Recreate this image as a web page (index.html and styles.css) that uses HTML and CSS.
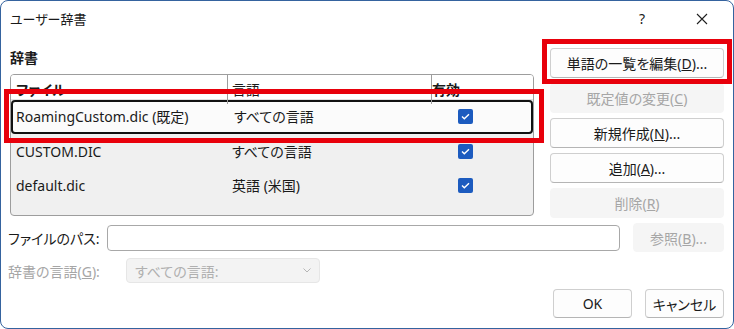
FILE: index.html
```html
<!DOCTYPE html>
<html>
<head>
    <title>ユーザー辞書</title>
    <link rel="stylesheet" href="styles.css">
</head>
<body>
    <div class="window">
        <div class="titlebar">
            <span class="title">ユーザー辞書</span>
            <span class="help">?</span>
            <span class="close">
                <svg width="12" height="12" viewBox="0 0 12 12"><path d="M1 1L11 11M11 1L1 11" stroke="#1f1f1f" stroke-width="1.1" fill="none"/></svg>
            </span>
        </div>

        <div class="main">
            <div class="left-col">
                <div class="group-label">辞書</div>
                <div class="dict-list">
                    <div class="list-head">
                        <div class="col-file">ファイル</div>
                        <div class="col-lang">言語</div>
                        <div class="col-on">有効</div>
                    </div>
                    <div class="list-row selected">
                        <div class="col-file">RoamingCustom.dic (既定)</div>
                        <div class="col-lang">すべての言語</div>
                        <div class="col-on"><span class="check"><svg width="15" height="15" viewBox="0 0 15 15"><path d="M4 7.6L6.3 9.8L11 5.2" stroke="#fff" stroke-width="1.4" fill="none"/></svg></span></div>
                    </div>
                    <div class="list-row">
                        <div class="col-file">CUSTOM.DIC</div>
                        <div class="col-lang">すべての言語</div>
                        <div class="col-on"><span class="check"><svg width="15" height="15" viewBox="0 0 15 15"><path d="M4 7.6L6.3 9.8L11 5.2" stroke="#fff" stroke-width="1.4" fill="none"/></svg></span></div>
                    </div>
                    <div class="list-row">
                        <div class="col-file">default.dic</div>
                        <div class="col-lang">英語 (米国)</div>
                        <div class="col-on"><span class="check"><svg width="15" height="15" viewBox="0 0 15 15"><path d="M4 7.6L6.3 9.8L11 5.2" stroke="#fff" stroke-width="1.4" fill="none"/></svg></span></div>
                    </div>
                </div>
            </div>
            <div class="right-col">
                <button class="btn">単語の一覧を編集(<u>D</u>)...</button>
                <button class="btn" disabled>既定値の変更(<u>C</u>)</button>
                <button class="btn">新規作成(<u>N</u>)...</button>
                <button class="btn">追加(<u>A</u>)...</button>
                <button class="btn" disabled>削除(<u>R</u>)</button>
            </div>
        </div>

        <div class="path-row">
            <span class="field-label">ファイルのパス:</span>
            <div class="path-input"></div>
            <button class="btn browse" disabled>参照(<u>B</u>)...</button>
        </div>

        <div class="lang-row">
            <span class="field-label off">辞書の言語(<u>G</u>):</span>
            <div class="lang-select">
                <span>すべての言語:</span>
                <svg width="8" height="5" viewBox="0 0 8 5"><path d="M0.5 0.5L4 4L7.5 0.5" stroke="#b5b5b5" stroke-width="1" fill="none"/></svg>
            </div>
        </div>

        <div class="footer">
            <button class="btn small">OK</button>
            <button class="btn small">キャンセル</button>
        </div>

        <div class="mark mark-row"></div>
        <div class="mark mark-btn"></div>
    </div>
</body>
</html>
```

FILE: styles.css
```css
body {
    margin: 0;
    font-family: "Noto Sans", "Noto Sans CJK JP", sans-serif;
    font-size: 14px;
    font-feature-settings: "palt";
    color: #1a1a1a;
    background: #ffffff;
}
.window {
    position: relative;
    width: 734px;
    height: 329px;
    box-sizing: border-box;
    border: 1px solid #35639f;
    border-radius: 8px;
    background: #ffffff;
    display: flex;
    flex-direction: column;
    overflow: hidden;
}
.titlebar {
    height: 35px;
    display: flex;
    align-items: center;
    padding-left: 9px;
    flex-shrink: 0;
}
.title {
    font-size: 13px;
    flex: 1;
}
.help {
    width: 60px;
    text-align: center;
    font-size: 14px;
}
.close {
    width: 60px;
    height: 12px;
    display: flex;
    justify-content: center;
    margin-right: 1px;
}
.main {
    display: flex;
    gap: 16px;
    padding: 12px 9px 0 9px;
}
.left-col {
    width: 524px;
}
.group-label {
    font-weight: bold;
    font-size: 14px;
    height: 20px;
    line-height: 20px;
    margin-bottom: 6px;
}
.dict-list {
    height: 142px;
    box-sizing: border-box;
    border: 1px solid #9d9d9d;
    border-radius: 4px;
    background: #f0f0f0;
    overflow: hidden;
}
.list-head,
.list-row {
    display: grid;
    grid-template-columns: 217px 204px 1fr;
}
.list-head {
    height: 25px;
    background: #ffffff;
    font-weight: bold;
    border-bottom: 1px solid #e0e0e0;
    box-sizing: border-box;
}
.list-head > div {
    line-height: 29px;
    border-right: 1px solid #9d9d9d;
}
.list-head .col-lang {
    font-weight: normal;
}
.list-head .col-on {
    border-right: none;
}
.col-file {
    padding-left: 5px;
}
.col-lang {
    padding-left: 4px;
}
.list-row {
    height: 34px;
    align-items: center;
}
.list-row .col-on {
    padding-left: 26px;
    display: flex;
}
.list-row.selected {
    background: #fbfbfb;
    border: 2px solid #111111;
    border-radius: 4px;
    box-sizing: border-box;
    padding-bottom: 2px;
}
.list-row.selected .col-file {
    padding-left: 3px;
}
.list-row.selected .col-on {
    padding-left: 24px;
}
.check {
    width: 15px;
    height: 15px;
    border-radius: 2px;
    background: #1c5bbf;
    display: flex;
}
.right-col {
    width: 174px;
    display: flex;
    flex-direction: column;
    gap: 5px;
}
.btn {
    height: 30px;
    font-family: inherit;
    font-size: 14px;
    font-feature-settings: "palt";
    color: #1a1a1a;
    background: #fdfdfd;
    border: 1px solid #cfcfcf;
    border-bottom-color: #b5b5b5;
    border-radius: 4px;
    padding: 0;
}
.btn:disabled {
    background: #f5f5f5;
    border-color: #f5f5f5;
    color: #a6a6a6;
}
.path-row {
    display: flex;
    align-items: center;
    padding: 5px 9px 0 7px;
    height: 29px;
}
.field-label {
    width: 99px;
    flex-shrink: 0;
}
.field-label.off {
    width: 118px;
    color: #a6a6a6;
}
.path-input {
    width: 513px;
    height: 26px;
    border: 1px solid #a8a8a8;
    border-radius: 4px;
    box-sizing: border-box;
}
.browse {
    width: 91px;
    height: 29px;
    margin-left: auto;
}
.lang-row {
    display: flex;
    align-items: center;
    padding: 6px 0 0 7px;
    height: 25px;
}
.lang-select {
    width: 194px;
    height: 25px;
    box-sizing: border-box;
    background: #f3f3f3;
    border: 1px solid #e6e6e6;
    border-radius: 4px;
    color: #b0b0b0;
    display: flex;
    align-items: center;
    justify-content: space-between;
    padding: 0 8px 0 8px;
}
.footer {
    display: flex;
    justify-content: flex-end;
    gap: 13px;
    padding: 6px 9px 0 0;
}
.btn.small {
    width: 79px;
    height: 29px;
}
.mark {
    position: absolute;
    border: 5px solid #e8000b;
    box-sizing: border-box;
}
.mark-row {
    left: 3px;
    top: 88px;
    width: 540px;
    height: 54px;
}
.mark-btn {
    left: 541px;
    top: 38px;
    width: 190px;
    height: 45px;
}
```
